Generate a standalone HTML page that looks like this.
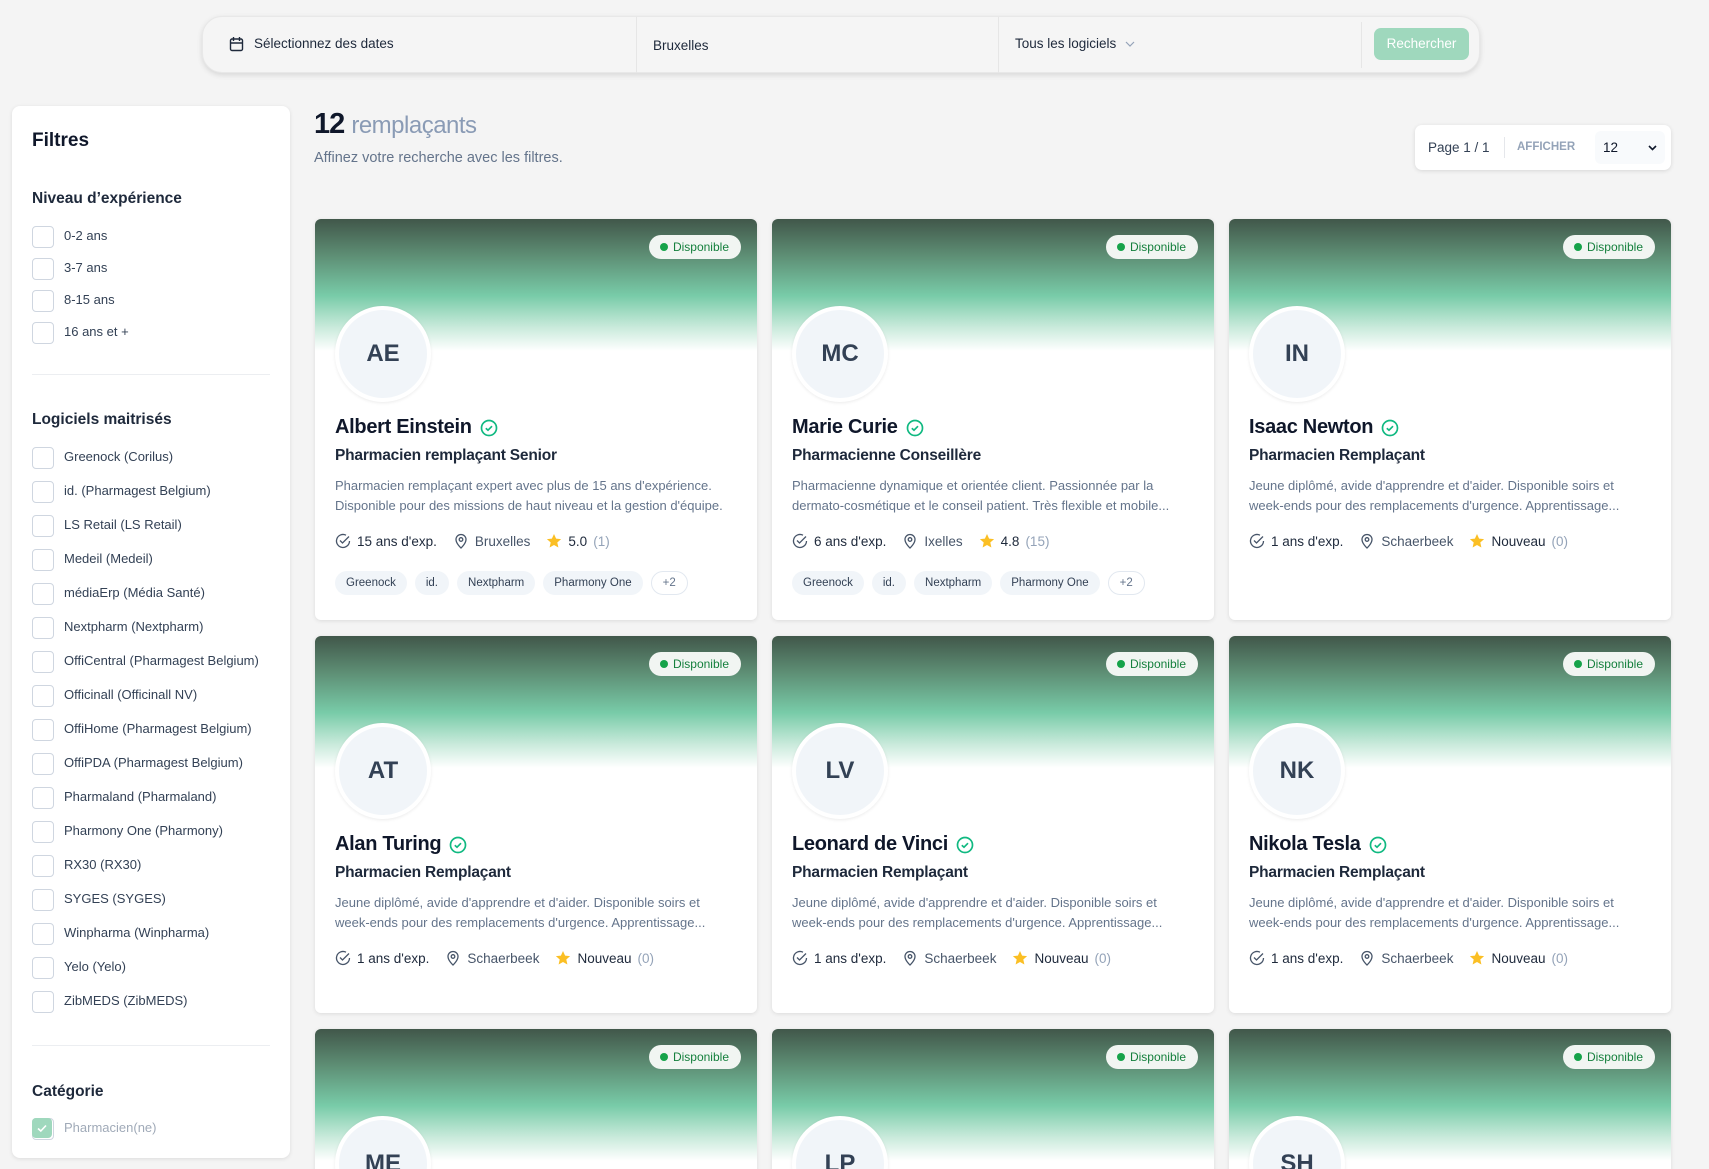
<!DOCTYPE html>
<html><head><meta charset="utf-8">
<style>
*{box-sizing:border-box;margin:0;padding:0}
html,body{width:1709px;height:1169px;overflow:hidden}
body{background:#f4f4f4;font-family:"Liberation Sans",sans-serif;color:#1e293b;position:relative}
#wrap{position:absolute;left:0;top:0;width:1709px;height:1169px;overflow:hidden}
.abs{position:absolute}
.search{left:202px;top:16px;width:1278px;height:57px;background:#f5f5f5;border-radius:20px;box-shadow:0 2px 6px rgba(0,0,0,.12);border:1px solid #e8e8e8}
.search .t{position:absolute;top:0;line-height:54px;font-size:13.5px;color:#1e293b}
.div{position:absolute;top:0;width:1px;height:56px;background:#e6e6e6}
.btn{position:absolute;left:1171px;top:11px;width:95px;height:32px;border-radius:7px;background:#9fd8bd;color:#fff;font-size:13.5px;text-align:center;line-height:32px}
.side{left:12px;top:106px;width:278px;height:1052px;background:#fff;border-radius:8px;box-shadow:0 1px 4px rgba(0,0,0,.1)}
.side h2{position:absolute;left:20px;font-size:19px;font-weight:bold;color:#0f172a}
.side h3{position:absolute;left:20px;font-size:15.5px;font-weight:bold;color:#1e293b}
.cb{position:absolute;left:20px;height:20px;font-size:13px;color:#334155;line-height:20px;padding-left:32px;white-space:nowrap}
.cb:before{content:"";position:absolute;left:0;top:0;width:20px;height:20px;border:1px solid #cfd6e0;border-radius:4px;background:#fff}
.hr{position:absolute;left:20px;width:238px;height:1px;background:#eceef1}
.card{position:absolute;width:442px;background:#fff;border-radius:6px;box-shadow:0 1px 4px rgba(0,0,0,.1);overflow:hidden}
.grad{position:absolute;left:0;top:0;width:100%;height:132px;background:linear-gradient(#41574a 0%,#5e8f75 28%,#78cba8 58%,#c9eadb 82%,#fff 100%)}
.badge{position:absolute;right:16px;top:16px;height:24px;padding:0 12px 0 24px;border-radius:12px;background:#f1f5f2;color:#15803d;font-size:12px;line-height:24px}
.badge:before{content:"";position:absolute;left:11px;top:8px;width:8px;height:8px;border-radius:50%;background:#16a34a}
.av{position:absolute;left:20px;top:87px;width:96px;height:96px;border-radius:50%;background:#f1f5f9;border:4px solid #fff;box-shadow:0 1px 3px rgba(0,0,0,.08);text-align:center;line-height:88px;font-size:24px;font-weight:bold;color:#334155}
.nm{position:absolute;left:20px;top:197px;font-size:20px;font-weight:bold;color:#0f172a;display:flex;align-items:center;gap:8px;white-space:nowrap;letter-spacing:-0.3px}
.ti{position:absolute;left:20px;top:228px;font-size:15.5px;font-weight:bold;color:#1e293b;letter-spacing:-0.2px}
.de{position:absolute;left:20px;top:257px;width:410px;font-size:13px;line-height:20px;color:#64748b;white-space:nowrap;overflow:hidden}
.me{position:absolute;left:20px;top:314px;font-size:13.5px;color:#1e293b;display:flex;align-items:center;white-space:nowrap}
.me svg{margin-right:6px}
.me .g{margin-right:16px}
.me .c{color:#94a3b8;margin-left:6px}
.tags{position:absolute;left:20px;top:352px;display:flex;gap:8px}
.tag{height:24px;padding:0 11px;border-radius:12px;background:#f1f5f9;font-size:11.5px;line-height:24px;color:#334155}
.tag.o{background:#fff;border:1px solid #e2e8f0;line-height:22px;color:#64748b}
</style></head><body><div id="wrap">

<div class="abs search">
  <svg style="position:absolute;left:26px;top:19px" width="15" height="16" viewBox="0 0 15 16" fill="none" stroke="#1e293b" stroke-width="1.4"><rect x="1.5" y="3" width="12" height="11.5" rx="1.5"/><path d="M1.5 7h12M4.5 1v4M10.5 1v4"/></svg>
  <div class="t" style="left:51px">Sélectionnez des dates</div>
  <div class="div" style="left:433px"></div>
  <div class="t" style="left:450px;top:2px">Bruxelles</div>
  <div class="div" style="left:795px"></div>
  <div class="t" style="left:812px">Tous les logiciels</div>
  <svg style="position:absolute;left:922px;top:24px" width="10" height="6" viewBox="0 0 10 6" fill="none" stroke="#94a3b8" stroke-width="1.2"><path d="M1 1l4 4 4-4"/></svg>
  <div class="div" style="left:1158px;top:5px;height:46px"></div>
  <div class="btn">Rechercher</div>
</div>

<div class="abs side">
  <h2 style="top:24px">Filtres</h2>
  <h3 style="top:84px">Niveau d’expérience</h3>
  <div class="cb" style="top:120px">0-2 ans</div>
  <div class="cb" style="top:152px">3-7 ans</div>
  <div class="cb" style="top:184px">8-15 ans</div>
  <div class="cb" style="top:216px">16 ans et +</div>
  <div class="hr" style="top:268px"></div>
  <h3 style="top:305px">Logiciels maitrisés</h3>
  <div class="cb" style="top:341px">Greenock (Corilus)</div>
  <div class="cb" style="top:375px">id. (Pharmagest Belgium)</div>
  <div class="cb" style="top:409px">LS Retail (LS Retail)</div>
  <div class="cb" style="top:443px">Medeil (Medeil)</div>
  <div class="cb" style="top:477px">médiaErp (Média Santé)</div>
  <div class="cb" style="top:511px">Nextpharm (Nextpharm)</div>
  <div class="cb" style="top:545px">OffiCentral (Pharmagest Belgium)</div>
  <div class="cb" style="top:579px">Officinall (Officinall NV)</div>
  <div class="cb" style="top:613px">OffiHome (Pharmagest Belgium)</div>
  <div class="cb" style="top:647px">OffiPDA (Pharmagest Belgium)</div>
  <div class="cb" style="top:681px">Pharmaland (Pharmaland)</div>
  <div class="cb" style="top:715px">Pharmony One (Pharmony)</div>
  <div class="cb" style="top:749px">RX30 (RX30)</div>
  <div class="cb" style="top:783px">SYGES (SYGES)</div>
  <div class="cb" style="top:817px">Winpharma (Winpharma)</div>
  <div class="cb" style="top:851px">Yelo (Yelo)</div>
  <div class="cb" style="top:885px">ZibMEDS (ZibMEDS)</div>
  <div class="hr" style="top:939px"></div>
  <h3 style="top:977px">Catégorie</h3>
  <div class="cb" style="top:1012px;color:#a0aab8">Pharmacien(ne)</div>
  <div style="position:absolute;left:20px;top:1012px;width:20px;height:20px;border-radius:4px;background:#9fd8bd"><svg width="20" height="20" viewBox="0 0 20 20" fill="none" stroke="#fff" stroke-width="1.6"><path d="M6 10.5l2.8 2.5L14 7.5"/></svg></div>
</div>

<div class="abs" style="left:314px;top:108px;font-size:29px;font-weight:bold;color:#0f172a;letter-spacing:-1px">12 <span style="font-weight:normal;color:#8a9bb5;font-size:24px;letter-spacing:-0.5px">remplaçants</span></div>
<div class="abs" style="left:314px;top:150px;font-size:14.5px;color:#64748b">Affinez votre recherche avec les filtres.</div>

<div class="abs" style="left:1415px;top:125px;width:256px;height:45px;background:#fff;border-radius:7px;box-shadow:0 1px 4px rgba(0,0,0,.12)">
  <div style="position:absolute;left:13px;top:0;line-height:45px;font-size:13.5px;color:#334155">Page 1 / 1</div>
  <div style="position:absolute;left:89px;top:12px;width:1px;height:21px;background:#e5e7eb"></div>
  <div style="position:absolute;left:102px;top:0;line-height:45px;font-size:11.5px;font-weight:bold;color:#94a3b8">AFFICHER</div>
  <div style="position:absolute;left:180px;top:6px;width:70px;height:33px;background:#f8fafc;border-radius:6px;font-size:13.5px;line-height:33px;padding-left:8px;color:#0f172a">12
    <svg style="position:absolute;right:8px;top:14px" width="9" height="6" viewBox="0 0 9 6" fill="none" stroke="#0f172a" stroke-width="1.6"><path d="M1 1l3.5 3.5L8 1"/></svg></div>
</div>

<!-- Row 1 -->
<div class="card" style="left:315px;top:219px;height:401px">
 <div class="grad"></div><div class="badge">Disponible</div><div class="av">AE</div>
 <div class="nm">Albert Einstein <svg width="18" height="18" viewBox="0 0 18 18" fill="none" stroke="#10b981" stroke-width="1.7"><circle cx="9" cy="9" r="7.5"/><path d="M5.8 9.2l2.2 2 4-4"/></svg></div>
 <div class="ti">Pharmacien remplaçant Senior</div>
 <div class="de">Pharmacien remplaçant expert avec plus de 15 ans d'expérience.<br>Disponible pour des missions de haut niveau et la gestion d'équipe.</div>
 <div class="me"><svg width="16" height="16" viewBox="0 0 16 16" fill="none" stroke="#475569" stroke-width="1.3"><path d="M14.5 8A6.5 6.5 0 1 1 11 2.2"/><path d="M5 7.5l2.5 2.5L14 3.5"/></svg><span class="g">15 ans d'exp.</span><svg width="16" height="16" viewBox="0 0 16 16" fill="none" stroke="#475569" stroke-width="1.3"><path d="M8 15s5-4.5 5-8.5A5 5 0 0 0 3 6.5C3 10.5 8 15 8 15z"/><circle cx="8" cy="6.5" r="1.8"/></svg><span class="g" style="color:#475569">Bruxelles</span><svg width="16" height="16" viewBox="0 0 16 16"><path d="M8 1l2.1 4.6 5 .5-3.8 3.4 1.1 5L8 12l-4.4 2.5 1.1-5L.9 6.1l5-.5z" fill="#fbbf24"/></svg><span>5.0</span><span class="c">(1)</span></div>
 <div class="tags"><span class="tag">Greenock</span><span class="tag">id.</span><span class="tag">Nextpharm</span><span class="tag">Pharmony One</span><span class="tag o">+2</span></div>
</div>
<div class="card" style="left:772px;top:219px;height:401px">
 <div class="grad"></div><div class="badge">Disponible</div><div class="av">MC</div>
 <div class="nm">Marie Curie <svg width="18" height="18" viewBox="0 0 18 18" fill="none" stroke="#10b981" stroke-width="1.7"><circle cx="9" cy="9" r="7.5"/><path d="M5.8 9.2l2.2 2 4-4"/></svg></div>
 <div class="ti">Pharmacienne Conseillère</div>
 <div class="de">Pharmacienne dynamique et orientée client. Passionnée par la<br>dermato-cosmétique et le conseil patient. Très flexible et mobile...</div>
 <div class="me"><svg width="16" height="16" viewBox="0 0 16 16" fill="none" stroke="#475569" stroke-width="1.3"><path d="M14.5 8A6.5 6.5 0 1 1 11 2.2"/><path d="M5 7.5l2.5 2.5L14 3.5"/></svg><span class="g">6 ans d'exp.</span><svg width="16" height="16" viewBox="0 0 16 16" fill="none" stroke="#475569" stroke-width="1.3"><path d="M8 15s5-4.5 5-8.5A5 5 0 0 0 3 6.5C3 10.5 8 15 8 15z"/><circle cx="8" cy="6.5" r="1.8"/></svg><span class="g" style="color:#475569">Ixelles</span><svg width="16" height="16" viewBox="0 0 16 16"><path d="M8 1l2.1 4.6 5 .5-3.8 3.4 1.1 5L8 12l-4.4 2.5 1.1-5L.9 6.1l5-.5z" fill="#fbbf24"/></svg><span>4.8</span><span class="c">(15)</span></div>
 <div class="tags"><span class="tag">Greenock</span><span class="tag">id.</span><span class="tag">Nextpharm</span><span class="tag">Pharmony One</span><span class="tag o">+2</span></div>
</div>
<div class="card" style="left:1229px;top:219px;height:401px">
 <div class="grad"></div><div class="badge">Disponible</div><div class="av">IN</div>
 <div class="nm">Isaac Newton <svg width="18" height="18" viewBox="0 0 18 18" fill="none" stroke="#10b981" stroke-width="1.7"><circle cx="9" cy="9" r="7.5"/><path d="M5.8 9.2l2.2 2 4-4"/></svg></div>
 <div class="ti">Pharmacien Remplaçant</div>
 <div class="de">Jeune diplômé, avide d'apprendre et d'aider. Disponible soirs et<br>week-ends pour des remplacements d'urgence. Apprentissage...</div>
 <div class="me"><svg width="16" height="16" viewBox="0 0 16 16" fill="none" stroke="#475569" stroke-width="1.3"><path d="M14.5 8A6.5 6.5 0 1 1 11 2.2"/><path d="M5 7.5l2.5 2.5L14 3.5"/></svg><span class="g">1 ans d'exp.</span><svg width="16" height="16" viewBox="0 0 16 16" fill="none" stroke="#475569" stroke-width="1.3"><path d="M8 15s5-4.5 5-8.5A5 5 0 0 0 3 6.5C3 10.5 8 15 8 15z"/><circle cx="8" cy="6.5" r="1.8"/></svg><span class="g" style="color:#475569">Schaerbeek</span><svg width="16" height="16" viewBox="0 0 16 16"><path d="M8 1l2.1 4.6 5 .5-3.8 3.4 1.1 5L8 12l-4.4 2.5 1.1-5L.9 6.1l5-.5z" fill="#fbbf24"/></svg><span>Nouveau</span><span class="c">(0)</span></div>
</div>

<!-- Row 2 -->
<div class="card" style="left:315px;top:636px;height:377px">
 <div class="grad"></div><div class="badge">Disponible</div><div class="av">AT</div>
 <div class="nm">Alan Turing <svg width="18" height="18" viewBox="0 0 18 18" fill="none" stroke="#10b981" stroke-width="1.7"><circle cx="9" cy="9" r="7.5"/><path d="M5.8 9.2l2.2 2 4-4"/></svg></div>
 <div class="ti">Pharmacien Remplaçant</div>
 <div class="de">Jeune diplômé, avide d'apprendre et d'aider. Disponible soirs et<br>week-ends pour des remplacements d'urgence. Apprentissage...</div>
 <div class="me"><svg width="16" height="16" viewBox="0 0 16 16" fill="none" stroke="#475569" stroke-width="1.3"><path d="M14.5 8A6.5 6.5 0 1 1 11 2.2"/><path d="M5 7.5l2.5 2.5L14 3.5"/></svg><span class="g">1 ans d'exp.</span><svg width="16" height="16" viewBox="0 0 16 16" fill="none" stroke="#475569" stroke-width="1.3"><path d="M8 15s5-4.5 5-8.5A5 5 0 0 0 3 6.5C3 10.5 8 15 8 15z"/><circle cx="8" cy="6.5" r="1.8"/></svg><span class="g" style="color:#475569">Schaerbeek</span><svg width="16" height="16" viewBox="0 0 16 16"><path d="M8 1l2.1 4.6 5 .5-3.8 3.4 1.1 5L8 12l-4.4 2.5 1.1-5L.9 6.1l5-.5z" fill="#fbbf24"/></svg><span>Nouveau</span><span class="c">(0)</span></div>
</div>
<div class="card" style="left:772px;top:636px;height:377px">
 <div class="grad"></div><div class="badge">Disponible</div><div class="av">LV</div>
 <div class="nm">Leonard de Vinci <svg width="18" height="18" viewBox="0 0 18 18" fill="none" stroke="#10b981" stroke-width="1.7"><circle cx="9" cy="9" r="7.5"/><path d="M5.8 9.2l2.2 2 4-4"/></svg></div>
 <div class="ti">Pharmacien Remplaçant</div>
 <div class="de">Jeune diplômé, avide d'apprendre et d'aider. Disponible soirs et<br>week-ends pour des remplacements d'urgence. Apprentissage...</div>
 <div class="me"><svg width="16" height="16" viewBox="0 0 16 16" fill="none" stroke="#475569" stroke-width="1.3"><path d="M14.5 8A6.5 6.5 0 1 1 11 2.2"/><path d="M5 7.5l2.5 2.5L14 3.5"/></svg><span class="g">1 ans d'exp.</span><svg width="16" height="16" viewBox="0 0 16 16" fill="none" stroke="#475569" stroke-width="1.3"><path d="M8 15s5-4.5 5-8.5A5 5 0 0 0 3 6.5C3 10.5 8 15 8 15z"/><circle cx="8" cy="6.5" r="1.8"/></svg><span class="g" style="color:#475569">Schaerbeek</span><svg width="16" height="16" viewBox="0 0 16 16"><path d="M8 1l2.1 4.6 5 .5-3.8 3.4 1.1 5L8 12l-4.4 2.5 1.1-5L.9 6.1l5-.5z" fill="#fbbf24"/></svg><span>Nouveau</span><span class="c">(0)</span></div>
</div>
<div class="card" style="left:1229px;top:636px;height:377px">
 <div class="grad"></div><div class="badge">Disponible</div><div class="av">NK</div>
 <div class="nm">Nikola Tesla <svg width="18" height="18" viewBox="0 0 18 18" fill="none" stroke="#10b981" stroke-width="1.7"><circle cx="9" cy="9" r="7.5"/><path d="M5.8 9.2l2.2 2 4-4"/></svg></div>
 <div class="ti">Pharmacien Remplaçant</div>
 <div class="de">Jeune diplômé, avide d'apprendre et d'aider. Disponible soirs et<br>week-ends pour des remplacements d'urgence. Apprentissage...</div>
 <div class="me"><svg width="16" height="16" viewBox="0 0 16 16" fill="none" stroke="#475569" stroke-width="1.3"><path d="M14.5 8A6.5 6.5 0 1 1 11 2.2"/><path d="M5 7.5l2.5 2.5L14 3.5"/></svg><span class="g">1 ans d'exp.</span><svg width="16" height="16" viewBox="0 0 16 16" fill="none" stroke="#475569" stroke-width="1.3"><path d="M8 15s5-4.5 5-8.5A5 5 0 0 0 3 6.5C3 10.5 8 15 8 15z"/><circle cx="8" cy="6.5" r="1.8"/></svg><span class="g" style="color:#475569">Schaerbeek</span><svg width="16" height="16" viewBox="0 0 16 16"><path d="M8 1l2.1 4.6 5 .5-3.8 3.4 1.1 5L8 12l-4.4 2.5 1.1-5L.9 6.1l5-.5z" fill="#fbbf24"/></svg><span>Nouveau</span><span class="c">(0)</span></div>
</div>

<!-- Row 3 -->
<div class="card" style="left:315px;top:1029px;height:200px">
 <div class="grad"></div><div class="badge">Disponible</div><div class="av">ME</div>
</div>
<div class="card" style="left:772px;top:1029px;height:200px">
 <div class="grad"></div><div class="badge">Disponible</div><div class="av">LP</div>
</div>
<div class="card" style="left:1229px;top:1029px;height:200px">
 <div class="grad"></div><div class="badge">Disponible</div><div class="av">SH</div>
</div>
</div></body></html>
